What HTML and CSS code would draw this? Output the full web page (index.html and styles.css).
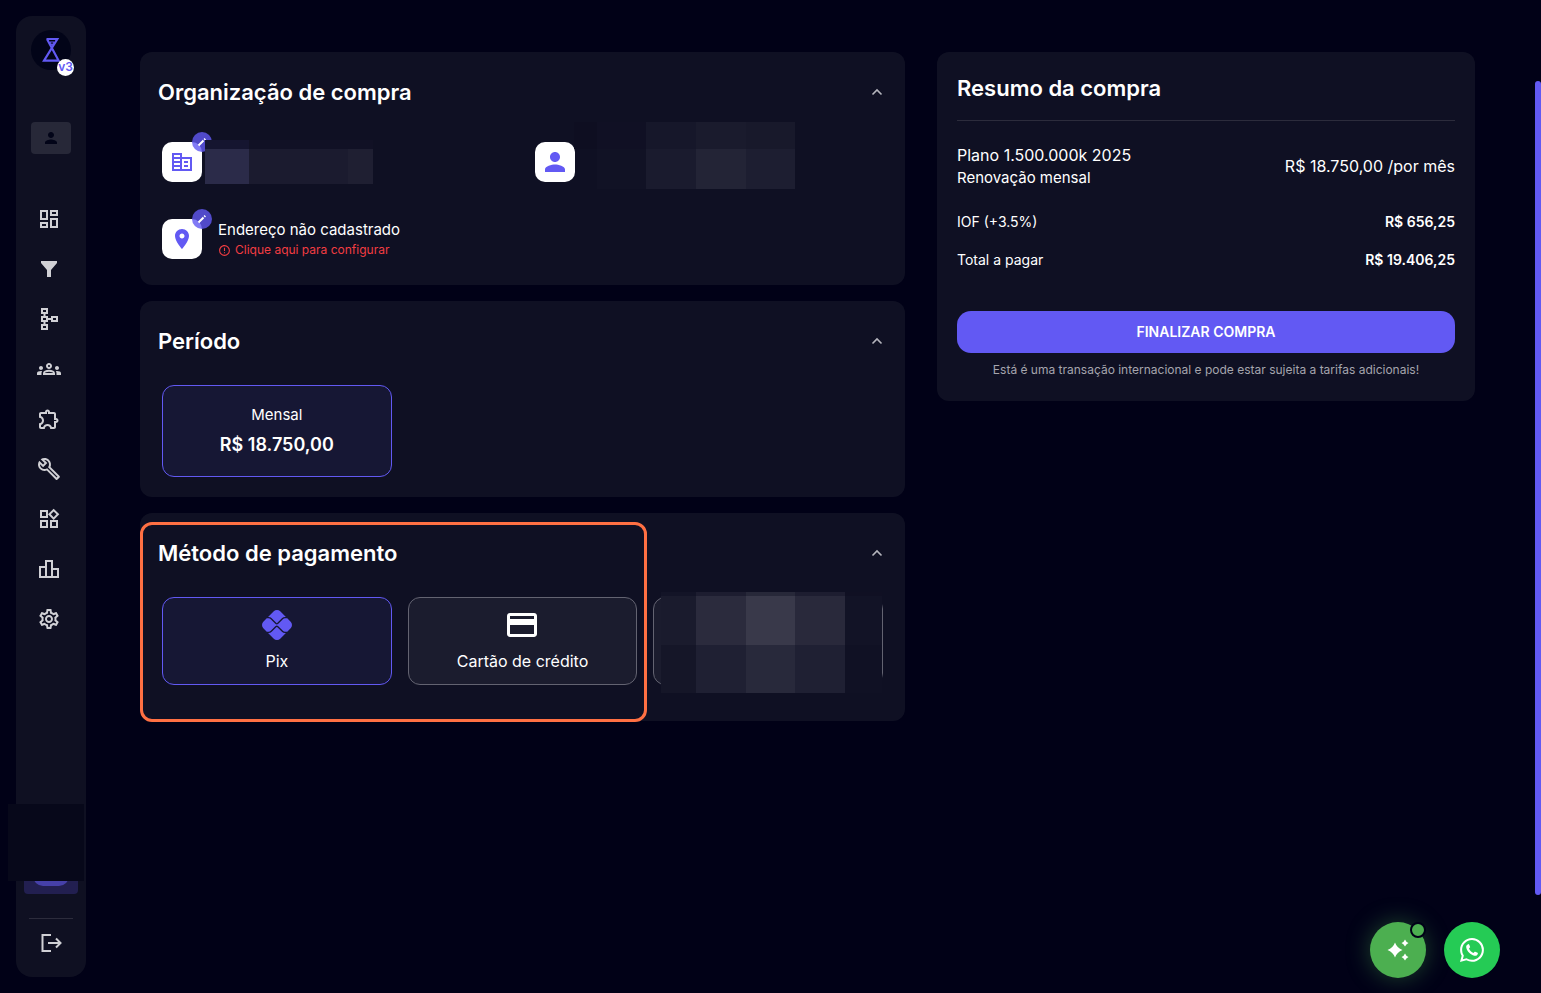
FILE: index.html
```html
<!DOCTYPE html>
<html lang="pt-BR">
<head>
    <meta charset="UTF-8">
    <meta name="viewport" content="width=device-width, initial-scale=1">
    <title>Finalizar compra</title>
    <link rel="stylesheet" href="styles.css">
</head>
<body>
    <aside class="sidebar">
        <a class="logo" href="#" aria-label="Início">
            <svg class="logo-mark" width="40" height="40" viewBox="0 0 40 40">
                <path d="M15.500 9h10.800L13 30.600h14.600L16 9" stroke-width="2.200"/>
                <path d="M19 12h4l-2 3.500z" stroke-width="1"/>
            </svg>
            <span class="logo-version">v3</span>
        </a>
        <button class="profile" type="button" aria-label="Perfil">
            <svg class="icon-small" viewBox="0 0 24 24"><path d="M12 12c2.210 0 4-1.790 4-4s-1.790-4-4-4-4 1.790-4 4 1.790 4 4 4zm0 2c-2.670 0-8 1.340-8 4v2h16v-2c0-2.660-5.330-4-8-4z"/></svg>
        </button>
        <nav class="menu">
            <a href="#" aria-label="Painel"><svg class="icon" viewBox="0 0 24 24"><path d="M19 5v2h-4V5h4M9 5v6H5V5h4m10 8v6h-4v-6h4M9 17v2H5v-2h4M21 3h-8v6h8V3zM11 3H3v10h8V3zm10 8h-8v10h8V11zm-10 4H3v6h8v-6z"/></svg></a>
            <a href="#" aria-label="Funil"><svg class="icon" viewBox="0 0 24 24"><path d="M4 4h16v2l-6 7v7h-4v-7L4 6z"/></svg></a>
            <a href="#" aria-label="Fluxos"><svg class="icon" viewBox="0 0 24 24"><path d="M14 9v2h-3V9H8.500V7H11V1H4v6h2.500v2H4v6h2.500v2H4v6h7v-6H8.500v-2H11v-2h3v2h7V9h-7zM6 3h3v2H6V3zm3 18H6v-2h3v2zm0-8H6v-2h3v2zm10 0h-3v-2h3v2z"/></svg></a>
            <a href="#" aria-label="Equipe"><svg class="icon" viewBox="0 0 24 24"><path d="M4 13c1.100 0 2-.9 2-2s-.9-2-2-2-2 .9-2 2 .9 2 2 2zm1.130 1.100c-.37-.06-.74-.1-1.130-.1-.99 0-1.930.21-2.780.58C.48 14.900 0 15.620 0 16.430V18h4.500v-1.610c0-.83.23-1.610.63-2.290zM20 13c1.100 0 2-.9 2-2s-.9-2-2-2-2 .9-2 2 .9 2 2 2zm4 3.430c0-.81-.48-1.530-1.220-1.850-.85-.37-1.790-.58-2.780-.58-.39 0-.76.04-1.130.1.4.68.63 1.460.63 2.290V18H24v-1.570zm-7.760-2.780c-1.170-.52-2.610-.9-4.240-.9-1.630 0-3.070.39-4.240.9C6.680 14.130 6 15.210 6 16.390V18h12v-1.610c0-1.180-.68-2.260-1.760-2.740zM8.070 16c.09-.23.13-.39.91-.69.97-.38 1.990-.56 3.020-.56s2.050.18 3.020.56c.77.3.81.46.91.69H8.070zM12 8c.55 0 1 .45 1 1s-.45 1-1 1-1-.45-1-1 .45-1 1-1m0-2c-1.660 0-3 1.340-3 3s1.340 3 3 3 3-1.340 3-3-1.340-3-3-3z"/></svg></a>
            <a href="#" aria-label="Integrações"><svg class="icon" viewBox="0 0 24 24"><path d="M10.500 4.500c.28 0 .5.22.5.5v2h6v6h2c.28 0 .5.22.5.5s-.22.5-.5.5h-2v6h-2.120c-.68-1.750-2.390-3-4.380-3s-3.700 1.250-4.380 3H4v-2.120c1.750-.68 3-2.390 3-4.380 0-1.990-1.240-3.700-2.990-4.380L4 7h6V5c0-.28.22-.5.5-.5m0-2C9.120 2.500 8 3.620 8 5H4c-1.100 0-1.990.9-1.990 2v3.800h.29c1.490 0 2.700 1.210 2.700 2.700s-1.210 2.700-2.700 2.700H2V20c0 1.100.9 2 2 2h3.800v-.3c0-1.490 1.210-2.700 2.700-2.700s2.700 1.210 2.700 2.700v.3H17c1.100 0 2-.9 2-2v-4c1.380 0 2.500-1.120 2.500-2.500S20.380 11 19 11V7c0-1.100-.9-2-2-2h-4c0-1.380-1.120-2.500-2.500-2.500z"/></svg></a>
            <a href="#" aria-label="Ferramentas"><svg class="icon" viewBox="0 0 24 24"><path d="M22.610 18.990l-9.080-9.080c.93-2.340.45-5.100-1.440-7C9.790.61 6.210.4 3.660 2.260L7.500 6.110 6.080 7.520 2.250 3.690C.39 6.230.6 9.820 2.900 12.110c1.860 1.860 4.570 2.350 6.890 1.480l9.110 9.110c.39.39 1.020.39 1.410 0l2.300-2.300c.4-.38.4-1.010 0-1.410zm-3 1.600l-9.460-9.460c-.61.45-1.290.72-2 .82-1.360.2-2.790-.21-3.830-1.250C3.370 9.760 2.930 8.500 3 7.260l3.090 3.090 4.240-4.240-3.090-3.090c1.240-.07 2.490.37 3.440 1.310 1.080 1.080 1.490 2.570 1.240 3.960-.12.71-.42 1.370-.88 1.960l9.450 9.450-.88.89z"/></svg></a>
            <a href="#" aria-label="Widgets"><svg class="icon" viewBox="0 0 24 24"><path d="M16.660 4.520l2.830 2.830-2.830 2.830-2.830-2.830 2.830-2.830M9 5v4H5V5h4m10 10v4h-4v-4h4M9 15v4H5v-4h4m7.660-13.310L11 7.340 16.660 13l5.660-5.660-5.660-5.650zM11 3H3v8h8V3zm10 10h-8v8h8v-8zm-10 0H3v8h8v-8z"/></svg></a>
            <a href="#" aria-label="Relatórios"><svg class="icon" viewBox="0 0 24 24"><path d="M16 11V3H8v6H2v12h20V11h-6zm-6-6h4v14h-4V5zm-6 6h4v8H4v-8zm16 8h-4v-6h4v6z"/></svg></a>
            <a href="#" aria-label="Configurações"><svg class="icon" viewBox="0 0 24 24"><path d="M19.430 12.980c.04-.32.07-.64.07-.98 0-.34-.03-.66-.07-.98l2.110-1.650c.19-.15.24-.42.12-.64l-2-3.460c-.09-.16-.26-.25-.44-.25-.06 0-.12.01-.17.03l-2.490 1c-.52-.4-1.080-.73-1.690-.98l-.38-2.650C14.460 2.180 14.250 2 14 2h-4c-.25 0-.46.18-.49.42l-.38 2.650c-.61.25-1.170.59-1.690.98l-2.490-1c-.06-.02-.12-.03-.18-.03-.17 0-.34.09-.43.25l-2 3.460c-.13.22-.07.49.12.64l2.110 1.650c-.04.32-.07.65-.07.98 0 .33.03.66.07.98l-2.110 1.650c-.19.15-.24.42-.12.64l2 3.460c.09.16.26.25.44.25.06 0 .12-.01.17-.03l2.490-1c.52.4 1.080.73 1.690.98l.38 2.650c.03.24.24.42.49.42h4c.25 0 .46-.18.49-.42l.38-2.650c.61-.25 1.170-.59 1.690-.98l2.490 1c.06.02.12.03.18.03.17 0 .34-.09.43-.25l2-3.460c.12-.22.07-.49-.12-.64l-2.110-1.650zm-1.980-1.710c.04.31.05.52.05.73 0 .21-.02.43-.05.73l-.14 1.130.89.7 1.080.84-.7 1.210-1.270-.51-1.040-.42-.9.68c-.43.32-.84.56-1.250.73l-1.060.43-.16 1.130-.2 1.350h-1.400l-.19-1.350-.16-1.130-1.060-.43c-.43-.18-.83-.41-1.230-.71l-.91-.7-1.060.43-1.270.51-.7-1.210 1.080-.84.89-.7-.14-1.130c-.03-.31-.05-.54-.05-.74s.02-.43.05-.73l.14-1.130-.89-.7-1.080-.84.7-1.210 1.270.51 1.040.42.9-.68c.43-.32.84-.56 1.250-.73l1.060-.43.16-1.130.2-1.350h1.390l.19 1.350.16 1.130 1.060.43c.43.18.83.41 1.230.71l.91.7 1.060-.43 1.270-.51.7 1.210-1.070.85-.89.7.14 1.130zM12 8c-2.210 0-4 1.790-4 4s1.790 4 4 4 4-1.790 4-4-1.790-4-4-4zm0 6c-1.100 0-2-.9-2-2s.9-2 2-2 2 .9 2 2-.9 2-2 2z"/></svg></a>
        </nav>
        <div class="plan-box">
            <span class="plan-pill"></span>
            <svg class="mosaic mosaic-plan" width="76" height="77"><rect width="76" height="77" fill="#07081a"/></svg>
        </div>
        <hr class="sidebar-line">
        <a class="logout" href="#" aria-label="Sair">
            <svg class="icon" viewBox="0 0 24 24"><path d="M12 4H3.500v16H12M9 12h12M17 7.500l4.500 4.500-4.500 4.500" fill="none" stroke="currentColor" stroke-width="2"/></svg>
        </a>
    </aside>

    <main class="checkout">
        <div class="sections">
            <section class="card">
                <header class="card-header">
                    <h2>Organização de compra</h2>
                    <button class="toggle" type="button" aria-label="Recolher organização"><svg class="icon-small" viewBox="0 0 18 18"><path d="M4.500 11.500L9 7l4.500 4.500" fill="none" stroke="currentColor" stroke-width="1.600"/></svg></button>
                </header>
                <div class="org-grid">
                    <div class="org-item">
                        <div class="org-icon">
                            <svg class="icon" viewBox="0 0 24 24"><path d="M12 7V3H2v18h20V7H12zM10 19H4v-2h6v2zm0-4H4v-2h6v2zm0-4H4V9h6v2zm0-4H4V5h6v2zm10 12h-8V9h8v10zm-2-8h-4v2h4v-2zm0 4h-4v2h4v-2z"/></svg>
                            <button class="edit" type="button" aria-label="Editar organização"><svg width="10" height="10" viewBox="0 0 10 10"><path d="M1.500 8.500l5-5M7.300 2.700l1-1" stroke="currentColor" stroke-width="2"/></svg></button>
                        </div>
                        <svg class="mosaic mosaic-company" width="168" height="44">
                            <rect width="44" height="9" fill="#151530"/>
                            <rect x="44" width="124" height="9" fill="#111125"/>
                            <rect y="9" width="44" height="35" fill="#2b2b49"/>
                            <rect x="44" y="9" width="99" height="35" fill="#1b1b2f"/>
                            <rect x="143" y="9" width="25" height="35" fill="#1f1f32"/>
                        </svg>
                    </div>
                    <div class="org-item">
                        <div class="org-icon">
                            <svg class="icon-person" viewBox="0 0 24 24"><path d="M12 12c2.210 0 4-1.790 4-4s-1.790-4-4-4-4 1.790-4 4 1.790 4 4 4zm0 2c-2.670 0-8 1.340-8 4v2h16v-2c0-2.660-5.330-4-8-4z"/></svg>
                        </div>
                        <svg class="mosaic mosaic-person" width="221" height="67">
                            <rect width="23" height="27" fill="#0e0e21"/>
                            <rect x="23" width="49" height="27" fill="#101024"/>
                            <rect x="72" width="50" height="27" fill="#16172a"/>
                            <rect x="122" width="50" height="27" fill="#1a1b2d"/>
                            <rect x="172" width="49" height="27" fill="#18192b"/>
                            <rect x="23" y="27" width="49" height="40" fill="#111225"/>
                            <rect x="72" y="27" width="50" height="40" fill="#1a1b2e"/>
                            <rect x="122" y="27" width="50" height="40" fill="#232436"/>
                            <rect x="172" y="27" width="49" height="40" fill="#1d1e31"/>
                        </svg>
                    </div>
                    <div class="org-item">
                        <div class="org-icon">
                            <svg class="icon" viewBox="0 0 24 24"><path d="M12 2C8.130 2 5 5.130 5 9c0 5.250 7 13 7 13s7-7.750 7-13c0-3.870-3.130-7-7-7zm0 9.500c-1.380 0-2.500-1.120-2.500-2.500s1.120-2.500 2.500-2.500 2.500 1.120 2.500 2.500-1.120 2.500-2.500 2.500z"/></svg>
                            <button class="edit" type="button" aria-label="Editar endereço"><svg width="10" height="10" viewBox="0 0 10 10"><path d="M1.500 8.500l5-5M7.300 2.700l1-1" stroke="currentColor" stroke-width="2"/></svg></button>
                        </div>
                        <div class="org-text">
                            <span>Endereço não cadastrado</span>
                            <a class="warning" href="#">
                                <svg width="13" height="13" viewBox="0 0 24 24"><path d="M11 15h2v2h-2zm0-8h2v6h-2zm1-5C6.470 2 2 6.500 2 12a10 10 0 1 0 10-10zm0 18a8 8 0 1 1 0-16 8 8 0 0 1 0 16z"/></svg>
                                Clique aqui para configurar
                            </a>
                        </div>
                    </div>
                </div>
            </section>

            <section class="card">
                <header class="card-header">
                    <h2>Período</h2>
                    <button class="toggle" type="button" aria-label="Recolher período"><svg class="icon-small" viewBox="0 0 18 18"><path d="M4.500 11.500L9 7l4.500 4.500" fill="none" stroke="currentColor" stroke-width="1.600"/></svg></button>
                </header>
                <div class="options">
                    <button class="option period selected" type="button">
                        <span class="period-name">Mensal</span>
                        <strong class="period-price">R$ 18.750,00</strong>
                    </button>
                </div>
            </section>

            <section class="card payment">
                <header class="card-header">
                    <h2>Método de pagamento</h2>
                    <button class="toggle" type="button" aria-label="Recolher pagamento"><svg class="icon-small" viewBox="0 0 18 18"><path d="M4.500 11.500L9 7l4.500 4.500" fill="none" stroke="currentColor" stroke-width="1.600"/></svg></button>
                </header>
                <div class="options">
                    <button class="option method selected" type="button">
                        <svg class="icon-pix" viewBox="0 0 24 24"><path d="M5.283 18.360a3.505 3.505 0 0 0 2.493-1.032l3.600-3.600a.684.684 0 0 1 .946 0l3.613 3.613a3.504 3.504 0 0 0 2.493 1.032h.71l-4.560 4.560a3.647 3.647 0 0 1-5.156 0L4.850 18.360ZM18.428 5.627a3.505 3.505 0 0 0-2.493 1.032l-3.613 3.614a.67.67 0 0 1-.946 0l-3.600-3.600A3.505 3.505 0 0 0 5.283 5.640h-.434l4.573-4.572a3.646 3.646 0 0 1 5.156 0l4.559 4.559ZM1.068 9.422 3.790 6.699h1.492a2.483 2.483 0 0 1 1.744.722l3.600 3.600a1.730 1.730 0 0 0 2.443 0l3.614-3.613a2.482 2.482 0 0 1 1.744-.723h1.767l2.737 2.737a3.646 3.646 0 0 1 0 5.156l-2.736 2.736h-1.768a2.482 2.482 0 0 1-1.744-.722l-3.613-3.613a1.770 1.770 0 0 0-2.444 0l-3.600 3.600a2.483 2.483 0 0 1-1.744.722H3.791l-2.723-2.723a3.646 3.646 0 0 1 0-5.156"/></svg>
                        <span>Pix</span>
                    </button>
                    <button class="option method" type="button">
                        <svg class="icon-card" viewBox="2 2 20 20"><path d="M20 4H4c-1.110 0-1.990.89-1.990 2L2 18c0 1.110.89 2 2 2h16c1.110 0 2-.89 2-2V6c0-1.110-.89-2-2-2zm0 14H4v-6h16v6zm0-10H4V6h16v2z"/></svg>
                        <span>Cartão de crédito</span>
                    </button>
                    <button class="option method" type="button" aria-label="Outro método">
                        <svg class="mosaic mosaic-method" width="221" height="101">
                            <rect width="35" height="4" fill="#131427"/>
                            <rect x="35" width="50" height="4" fill="#1d1d30"/>
                            <rect x="85" width="49" height="4" fill="#272839"/>
                            <rect x="134" width="50" height="4" fill="#1d1d30"/>
                            <rect x="184" width="37" height="4" fill="#101023"/>
                            <rect y="4" width="35" height="49" fill="#1a1b2d"/>
                            <rect x="35" y="4" width="50" height="49" fill="#2b2b3d"/>
                            <rect x="85" y="4" width="49" height="49" fill="#39394a"/>
                            <rect x="134" y="4" width="50" height="49" fill="#29293b"/>
                            <rect x="184" y="4" width="37" height="49" fill="#121326"/>
                            <rect y="53" width="35" height="48" fill="#151628"/>
                            <rect x="35" y="53" width="50" height="48" fill="#1f2033"/>
                            <rect x="85" y="53" width="49" height="48" fill="#28293b"/>
                            <rect x="134" y="53" width="50" height="48" fill="#1f2033"/>
                            <rect x="184" y="53" width="37" height="48" fill="#101124"/>
                        </svg>
                    </button>
                </div>
                <div class="highlight"></div>
            </section>
        </div>

        <aside class="card summary">
            <h2 class="summary-title">Resumo da compra</h2>
            <div class="summary-plan">
                <div>
                    <div class="plan-name">Plano 1.500.000k 2025</div>
                    <div class="plan-renewal">Renovação mensal</div>
                </div>
                <span class="plan-price">R$ 18.750,00 /por mês</span>
            </div>
            <dl class="totals">
                <div class="total-row">
                    <dt>IOF (+3.5%)</dt>
                    <dd>R$ 656,25</dd>
                </div>
                <div class="total-row">
                    <dt>Total a pagar</dt>
                    <dd>R$ 19.406,25</dd>
                </div>
            </dl>
            <button class="finish" type="button">FINALIZAR COMPRA</button>
            <p class="note">Está é uma transação internacional e pode estar sujeita a tarifas adicionais!</p>
        </aside>
    </main>

    <div class="floating">
        <button class="fab fab-ai" type="button" aria-label="Assistente">
            <svg width="24" height="24" viewBox="0 0 24 24"><path d="M9 4.500Q11 10 16.500 12 11 14 9 19.500 7 14 1.500 12 7 10 9 4.500zM19 1.500Q20 4 22.500 5 20 6 19 8.500 18 6 15.500 5 18 4 19 1.500zM19 15.500Q20 18 22.500 19 20 20 19 22.500 18 20 15.500 19 18 18 19 15.500z"/></svg>
            <span class="fab-dot"></span>
        </button>
        <button class="fab fab-whatsapp" type="button" aria-label="WhatsApp">
            <svg width="24" height="24" viewBox="0 0 16 16"><path d="M13.601 2.326A7.850 7.850 0 0 0 7.994 0C3.627 0 .068 3.558.064 7.926c0 1.399.366 2.760 1.057 3.965L0 16l4.204-1.102a7.900 7.900 0 0 0 3.790.965h.004c4.368 0 7.926-3.558 7.930-7.930A7.900 7.900 0 0 0 13.600 2.326zM7.994 14.521a6.600 6.600 0 0 1-3.356-.92l-.24-.144-2.494.654.666-2.433-.156-.251a6.560 6.560 0 0 1-1.007-3.505c0-3.626 2.957-6.584 6.591-6.584a6.560 6.560 0 0 1 4.660 1.931 6.560 6.560 0 0 1 1.928 4.660c-.004 3.639-2.961 6.592-6.592 6.592z"/><path d="M5.500 4.100c-1 .2-1.600 1.200-1.300 2.400.6 2.500 2.800 4.700 5.300 5.300 1.200.3 2.200-.3 2.400-1.300.1-.3 0-.5-.2-.6l-1.500-.7c-.3-.1-.5 0-.6.2l-.6.6C7.700 9.500 6.500 8.300 6 7l.6-.6c.2-.2.2-.4.1-.6l-.6-1.400c-.1-.3-.3-.4-.6-.3z"/></svg>
        </button>
    </div>
    <div class="scroll-thumb"></div>
</body>
</html>
```

FILE: styles.css
```css
* { box-sizing: border-box; }
body {
    margin: 0;
    min-height: 100vh;
    display: flex;
    background: #010117;
    color: #fff;
    font-family: Inter, "Noto Sans", sans-serif;
    font-size: 14px;
    line-height: 22px;
}
a { color: inherit; text-decoration: none; }
button {
    border: none;
    padding: 0;
    color: inherit;
    font: inherit;
    background: none;
    cursor: pointer;
}
svg { display: block; fill: currentColor; }
h2 {
    margin: 0;
    font-size: 22px;
    font-weight: 600;
    line-height: 32px;
}
.icon { width: 24px; height: 24px; }
.icon-small { width: 18px; height: 18px; }
.icon-person { width: 30px; height: 30px; }

/* sidebar */
.sidebar {
    position: sticky;
    top: 16px;
    width: 70px;
    height: calc(100vh - 32px);
    margin: 16px 0 16px 16px;
    padding: 14px 0 22px;
    display: flex;
    flex-direction: column;
    align-items: center;
    flex-shrink: 0;
    background: #0f1022;
    border-radius: 16px;
}
.logo {
    position: relative;
    width: 40px;
    height: 40px;
    border-radius: 50%;
    background: #020418;
    color: #6259f3;
}
.logo-mark {
    fill: none;
    stroke: currentColor;
}
.logo-version {
    position: absolute;
    right: -3px;
    bottom: -6px;
    width: 17px;
    height: 17px;
    border-radius: 50%;
    background: #fff;
    font-size: 12px;
    font-weight: 600;
    line-height: 16px;
    text-align: center;
}
.profile {
    width: 40px;
    height: 32px;
    margin-top: 52px;
    display: grid;
    place-items: center;
    border-radius: 4px;
    background: #272838;
    color: #020418;
}
.menu {
    margin-top: 40px;
    padding-right: 4px;
    color: #d0d0d5;
}
.menu a {
    width: 48px;
    height: 50px;
    display: grid;
    place-items: center;
}
.plan-box {
    position: relative;
    width: 54px;
    height: 60px;
    margin-top: auto;
    padding-bottom: 8px;
    display: flex;
    align-items: flex-end;
    justify-content: center;
    border-radius: 4px;
    background: #221f50;
}
.plan-pill {
    width: 36px;
    height: 20px;
    border-radius: 10px;
    background: #4640a9;
}
.sidebar-line {
    width: 44px;
    margin: 24px 0 12px;
    border: none;
    border-top: 1px solid #2c2c3c;
}
.logout { color: #d0d0d5; }

/* pixelated areas lie over the content they hide */
.mosaic { position: absolute; }
.mosaic-plan { left: -16px; bottom: 13px; }
.mosaic-company { left: 43px; top: -2px; }
.mosaic-person { left: 39px; top: -20px; }
.mosaic-method { left: 7px; top: -6px; }

/* checkout */
.checkout {
    flex: 1;
    min-width: 0;
    padding: 52px 66px 52px 54px;
    display: grid;
    grid-template-columns: 1.422fr 1fr;
    gap: 32px;
    align-items: start;
}
.sections {
    display: grid;
    gap: 16px;
}
.card {
    position: relative;
    padding-bottom: 20px;
    border-radius: 12px;
    background: #0f1023;
}
.card-header {
    height: 80px;
    margin-bottom: 4px;
    padding: 0 19px 0 18px;
    display: flex;
    align-items: center;
    justify-content: space-between;
}
.toggle { color: #b5b5bd; }
.org-grid {
    padding: 6px 22px;
    display: grid;
    grid-template-columns: 1fr 1fr;
    gap: 37px 24px;
}
.org-item {
    position: relative;
    display: flex;
    gap: 16px;
}
.org-icon {
    position: relative;
    width: 40px;
    height: 40px;
    display: grid;
    place-items: center;
    border-radius: 10px;
    background: #fff;
    color: #6259f3;
}
.edit {
    position: absolute;
    top: -10px;
    right: -10px;
    width: 20px;
    height: 20px;
    display: grid;
    place-items: center;
    border-radius: 50%;
    background: rgba(98, 89, 243, 0.8);
    color: #fff;
}
.org-text {
    display: flex;
    flex-direction: column;
    font-size: 15px;
    line-height: 22px;
}
.warning {
    display: flex;
    align-items: center;
    gap: 4px;
    color: #f23d42;
    font-size: 12px;
    line-height: 18px;
}
.options {
    padding: 0 22px;
    display: grid;
    grid-template-columns: repeat(3, 1fr);
    gap: 16px;
}
.option {
    position: relative;
    display: flex;
    flex-direction: column;
    align-items: center;
    border: 1px solid #636371;
    border-radius: 12px;
    background: #1b1c2e;
}
.option.selected {
    border-color: #6259f3;
    background: #161734;
}
.period { padding: 18px 8px 16px; }
.period-name { font-size: 15px; }
.period-price {
    margin-top: 4px;
    font-size: 18px;
    font-weight: 600;
    line-height: 30px;
}
.method {
    height: 88px;
    padding-top: 12px;
    gap: 10px;
    font-size: 16px;
}
.icon-pix {
    width: 30px;
    height: 30px;
    color: #6259f3;
}
.icon-card {
    width: 30px;
    height: 30px;
}
.payment { padding-bottom: 36px; }
.highlight {
    position: absolute;
    top: 9px;
    bottom: -1px;
    left: 0;
    width: 507px;
    border: 3px solid #ff7043;
    border-radius: 12px;
    pointer-events: none;
}

/* summary */
.summary { padding: 20px 20px 22px; }
.summary-title {
    padding-bottom: 16px;
    border-bottom: 1px solid #2c2c3c;
}
.summary-plan {
    margin: 22px 0;
    display: flex;
    align-items: center;
    justify-content: space-between;
}
.plan-name {
    font-size: 16px;
    line-height: 24px;
}
.plan-renewal { font-size: 15px; }
.plan-price { font-size: 16px; }
.totals {
    margin: 0 0 40px;
    display: grid;
    gap: 16px;
}
.total-row {
    display: flex;
    justify-content: space-between;
}
.total-row dd {
    margin: 0;
    font-weight: 600;
}
.finish {
    width: 100%;
    height: 42px;
    border-radius: 14px;
    background: #6259f3;
    font-weight: 600;
}
.note {
    margin: 8px 0 0;
    color: #a5a5ad;
    font-size: 12px;
    line-height: 18px;
    text-align: center;
}

.floating {
    position: fixed;
    right: 41px;
    bottom: 15px;
    display: flex;
    gap: 18px;
}
.fab {
    position: relative;
    width: 56px;
    height: 56px;
    display: grid;
    place-items: center;
    border-radius: 50%;
}
.fab-ai {
    background: #4caf50;
    box-shadow: 0 0 24px rgba(76, 175, 80, 0.4);
}
.fab-whatsapp { background: #25cb55; }
.fab-dot {
    position: absolute;
    top: 0;
    right: 0;
    width: 16px;
    height: 16px;
    border: 2px solid #010117;
    border-radius: 50%;
    background: #4caf50;
}
.scroll-thumb {
    position: fixed;
    top: 81px;
    right: 0;
    width: 6px;
    height: 82vh;
    border-radius: 3px;
    background: #6259f3;
}
```
